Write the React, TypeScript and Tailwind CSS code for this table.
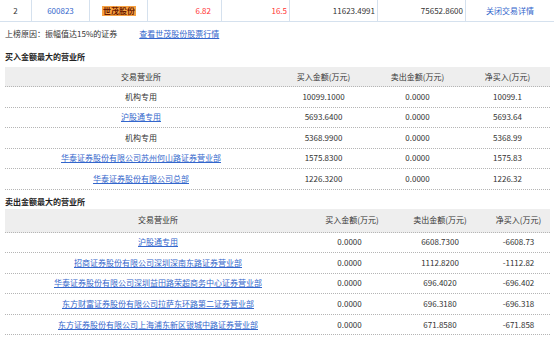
type Row = { name: string; link: boolean; buy: string; sell: string; net: string };

const buyRows: Row[] = [
  { name: '机构专用', link: false, buy: '10099.1000', sell: '0.0000', net: '10099.1' },
  { name: '沪股通专用', link: true, buy: '5693.6400', sell: '0.0000', net: '5693.64' },
  { name: '机构专用', link: false, buy: '5368.9900', sell: '0.0000', net: '5368.99' },
  { name: '华泰证券股份有限公司苏州何山路证券营业部', link: true, buy: '1575.8300', sell: '0.0000', net: '1575.83' },
  { name: '华泰证券股份有限公司总部', link: true, buy: '1226.3200', sell: '0.0000', net: '1226.32' },
];

const sellRows: Row[] = [
  { name: '沪股通专用', link: true, buy: '0.0000', sell: '6608.7300', net: '-6608.73' },
  { name: '招商证券股份有限公司深圳深南东路证券营业部', link: true, buy: '0.0000', sell: '1112.8200', net: '-1112.82' },
  { name: '华泰证券股份有限公司深圳益田路荣超商务中心证券营业部', link: true, buy: '0.0000', sell: '696.4020', net: '-696.402' },
  { name: '东方财富证券股份有限公司拉萨东环路第二证券营业部', link: true, buy: '0.0000', sell: '696.3180', net: '-696.318' },
  { name: '东方证券股份有限公司上海浦东新区银城中路证券营业部', link: true, buy: '0.0000', sell: '671.8580', net: '-671.858' },
];

const font = { fontFamily: '"Noto Sans CJK SC", "Liberation Sans", sans-serif' };

function BuyTable() {
  return (
    <div className="ml-[5px] w-[545px]">
      <div className="flex h-[20px] items-center bg-[#eeeeee] border-b border-dotted border-[#b5b5b5] text-[#333]">
        <div className="w-[272px] text-center">交易营业所</div>
        <div className="w-[93px] text-center">买入金额(万元)</div>
        <div className="w-[95px] text-center">卖出金额(万元)</div>
        <div className="w-[85px] text-center">净买入(万元)</div>
      </div>
      {buyRows.map((r, i) => (
        <div key={i} className="flex h-[20.5px] items-center border-b border-dotted border-[#b5b5b5] text-[#333]">
          <div className="w-[272px] text-center">
            {r.link ? <span className="text-[#3366cc] underline">{r.name}</span> : r.name}
          </div>
          <div className="w-[93px] text-center">{r.buy}</div>
          <div className="w-[95px] text-center">{r.sell}</div>
          <div className="w-[85px] text-center">{r.net}</div>
        </div>
      ))}
    </div>
  );
}

function SellTable() {
  return (
    <div className="ml-[5px] w-[545px]">
      <div className="flex h-[24px] items-center bg-[#eeeeee] border-b border-dotted border-[#b5b5b5] text-[#333]">
        <div className="w-[306px] text-center">交易营业所</div>
        <div className="w-[82px] text-center">买入金额(万元)</div>
        <div className="w-[94px] text-center">卖出金额(万元)</div>
        <div className="w-[63px] text-center">净买入(万元)</div>
      </div>
      {sellRows.map((r, i) => (
        <div key={i} className="flex h-[20.6px] items-center border-b border-dotted border-[#b5b5b5] text-[#333]">
          <div className="w-[306px] text-center">
            <span className="text-[#3366cc] underline">{r.name}</span>
          </div>
          <div className="w-[82px] text-center pr-[5px]">{r.buy}</div>
          <div className="w-[94px] text-center">{r.sell}</div>
          <div className="w-[63px] text-center">{r.net}</div>
        </div>
      ))}
    </div>
  );
}

export default function App() {
  return (
    <div className="w-[554px] h-[341px] bg-white overflow-hidden text-[8px] leading-none" style={font}>
      {/* stock summary row */}
      <div className="flex h-[22px] items-center border-b border-[#d5e1ee] text-[#333]">
        <div className="w-[32px] h-full flex items-center justify-center border-r border-[#d5e1ee]">2</div>
        <div className="w-[58px] h-full flex items-center justify-center border-r border-[#d5e1ee] text-[#3366cc]">600823</div>
        <div className="w-[58px] h-full flex items-center pl-[12px] border-r border-[#d5e1ee]">
          <span className="bg-[#f7a243] text-[#6b1a00] font-bold px-[1px] py-[1px]">世茂股份</span>
        </div>
        <div className="w-[74px] h-full flex items-center justify-end pr-[10px] border-r border-[#d5e1ee] text-[#ff3333]">6.82</div>
        <div className="w-[68px] h-full flex items-center justify-end pr-[2px] border-r border-[#d5e1ee] text-[#ff3333]">16.5</div>
        <div className="w-[88px] h-full flex items-center justify-end pr-[2px] border-r border-[#d5e1ee]">11623.4991</div>
        <div className="w-[88px] h-full flex items-center justify-end pr-[2px] border-r border-[#d5e1ee]">75652.8600</div>
        <div className="w-[88px] h-full flex items-center justify-center text-[#3366cc]">关闭交易详情</div>
      </div>

      <div className="h-[24px] flex items-center pl-[5px] text-[#333]">
        <span>上榜原因：振幅值达15%的证券</span>
        <span className="ml-[22px] text-[#3366cc] underline">查看世茂股份股票行情</span>
      </div>

      <div className="h-[21px] flex items-center pl-[5px] font-bold text-[#222]">买入金额最大的营业所</div>
      <BuyTable />

      <div className="h-[19px] flex items-center pt-[5px] pl-[5px] font-bold text-[#222]">卖出金额最大的营业所</div>
      <SellTable />
    </div>
  );
}
